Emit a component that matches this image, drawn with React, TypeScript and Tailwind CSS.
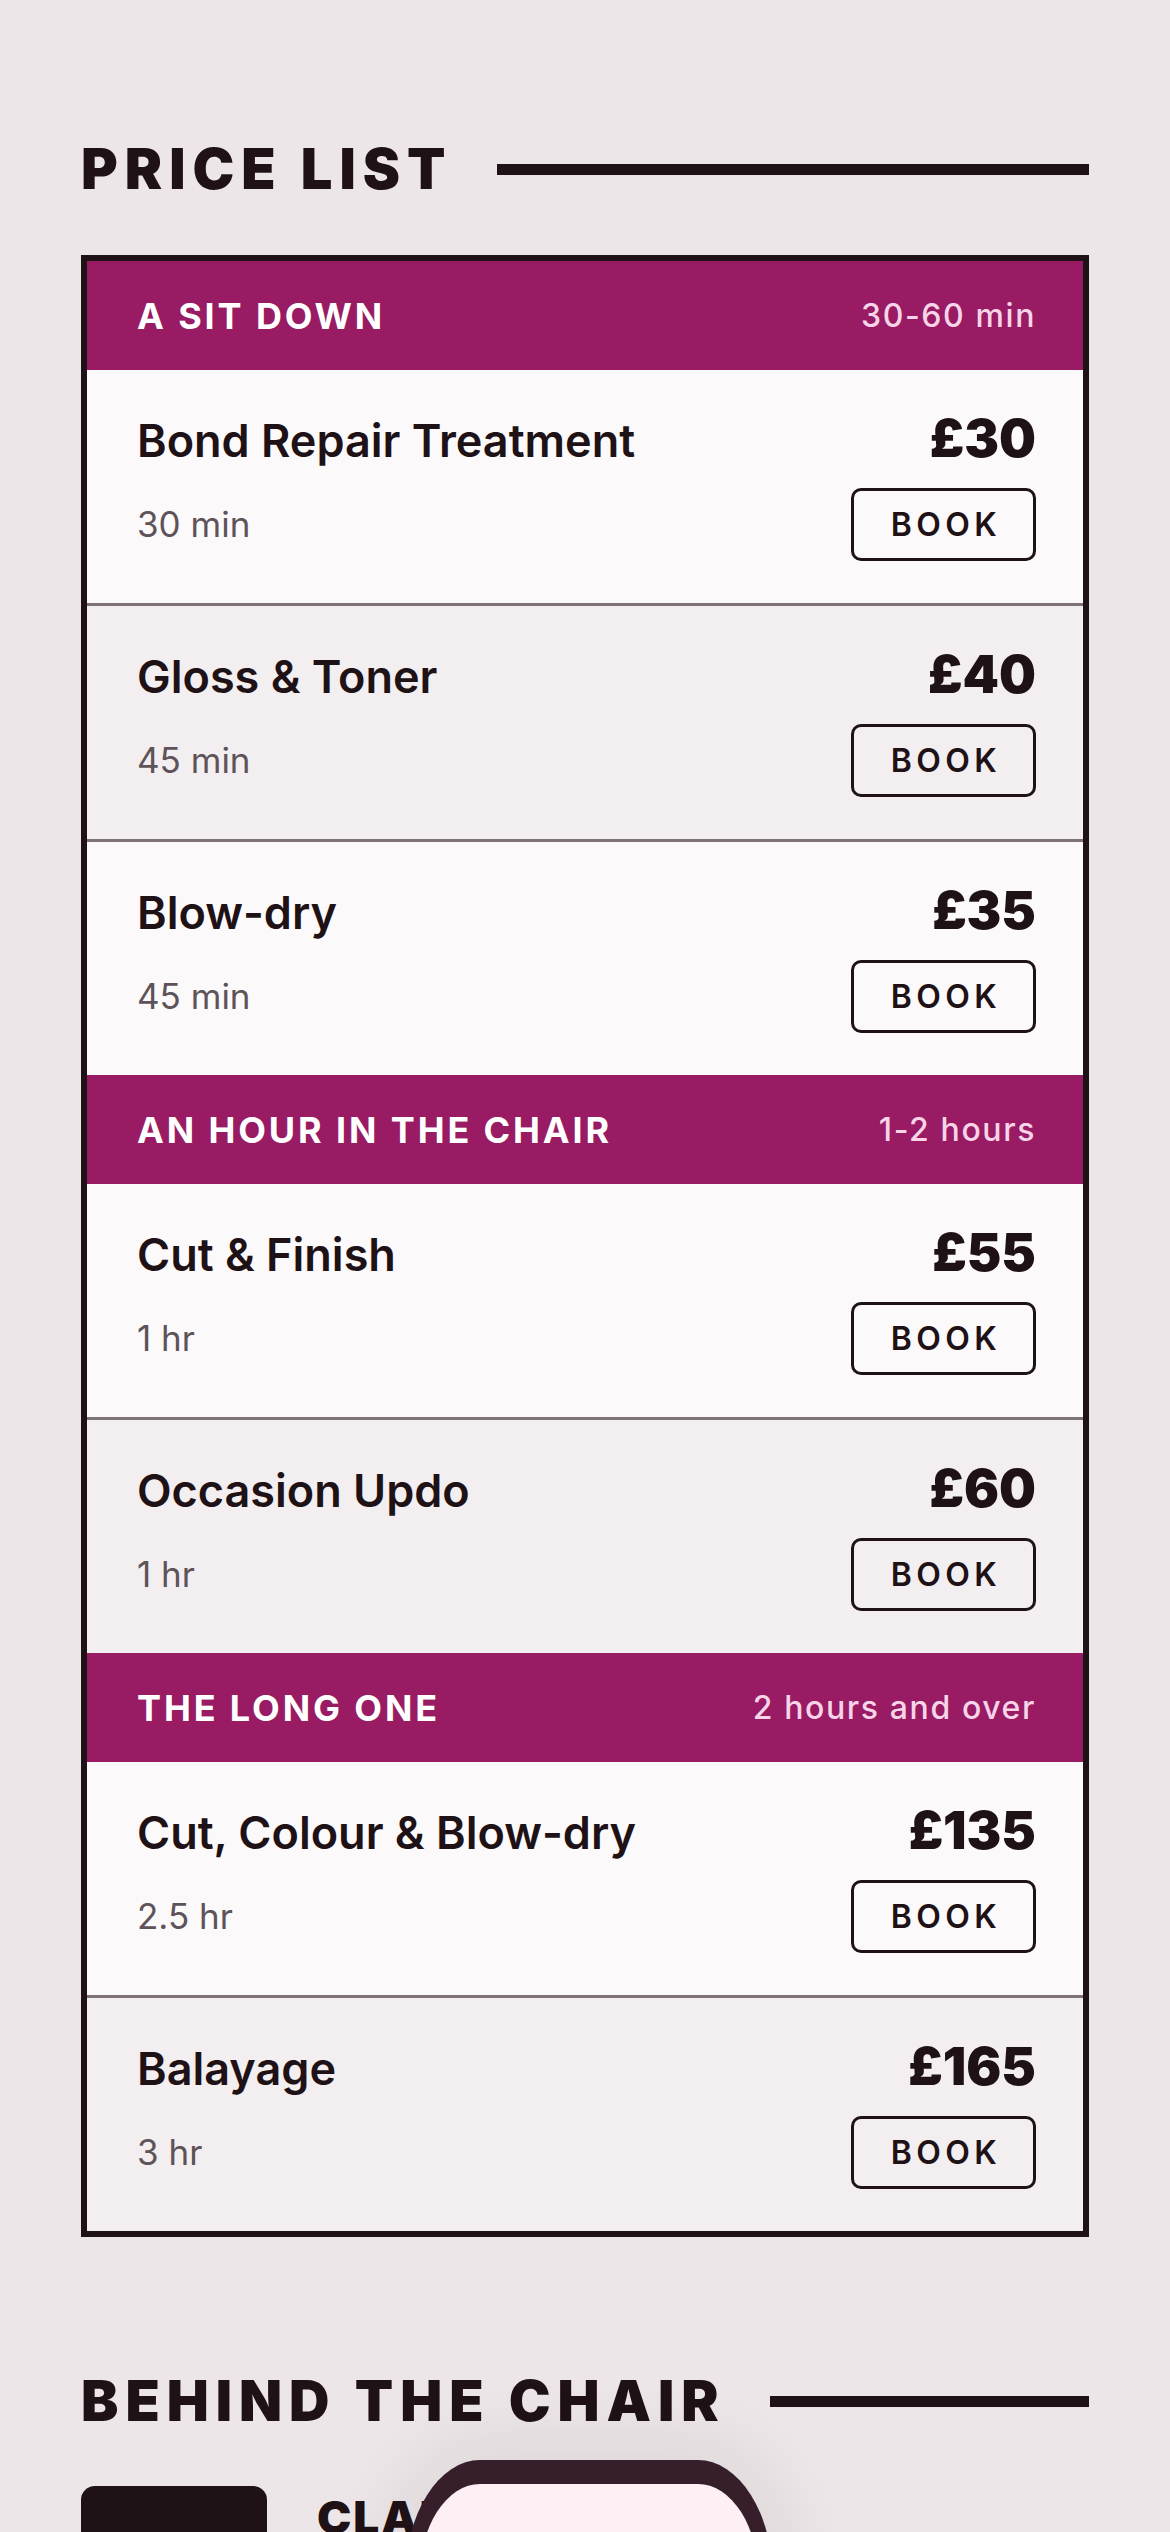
const groups = [
  {
    title: 'A SIT DOWN',
    range: '30-60 min',
    items: [
      { name: 'Bond Repair Treatment', time: '30 min', price: '£30' },
      { name: 'Gloss & Toner', time: '45 min', price: '£40' },
      { name: 'Blow-dry', time: '45 min', price: '£35' },
    ],
  },
  {
    title: 'AN HOUR IN THE CHAIR',
    range: '1-2 hours',
    items: [
      { name: 'Cut & Finish', time: '1 hr', price: '£55' },
      { name: 'Occasion Updo', time: '1 hr', price: '£60' },
    ],
  },
  {
    title: 'THE LONG ONE',
    range: '2 hours and over',
    items: [
      { name: 'Cut, Colour & Blow-dry', time: '2.5 hr', price: '£135' },
      { name: 'Balayage', time: '3 hr', price: '£165' },
    ],
  },
];

const display = { fontFamily: 'Inter, "Liberation Sans", sans-serif' };

function SectionTitle({ children }: { children: string }) {
  return (
    <div className="flex items-center gap-[44px]">
      <h2 className="text-[56px] leading-none font-black tracking-[0.125em] text-[#1e1216] whitespace-nowrap" style={display}>
        {children}
      </h2>
      <div className="h-[11px] flex-1 bg-[#1e1216]" />
    </div>
  );
}

export default function App() {
  return (
    <div className="relative min-h-[2532px] overflow-hidden bg-[#ece6e8] text-[#1e1216]" style={{ fontFamily: 'Inter, "Liberation Sans", sans-serif' }}>
      <div className="px-[81px] pt-[141px]">
        <SectionTitle>PRICE LIST</SectionTitle>

        {/* Price list card */}
        <div className="mt-[58px] border-[6px] border-[#1e1216]">
          {groups.map((group) => (
            <div key={group.title}>
              <div className="flex h-[109px] items-center justify-between bg-[#981b63] pl-[50px] pr-[47px]">
                <span className="text-[36px] font-bold tracking-[0.08em] text-white">{group.title}</span>
                <span className="text-[32px] font-medium tracking-[0.05em] text-[#f7d4e7]">{group.range}</span>
              </div>
              {group.items.map((item, idx) => (
                <div
                  key={item.name}
                  className={
                    (idx % 2 === 0 ? 'bg-[#fbf9fa] ' : 'bg-[#f3eff0] ') +
                    (idx > 0 ? 'border-t-[3px] border-[#807378] ' : '') +
                    'pl-[50px] pr-[47px] pt-[43px] pb-[42px]'
                  }
                >
                  <div className="flex items-baseline justify-between">
                    <span className="text-[45px] leading-none font-semibold">{item.name}</span>
                    <span className="text-[52px] leading-none font-black" style={display}>{item.price}</span>
                  </div>
                  <div className="mt-[23px] flex items-center justify-between">
                    <span className="text-[35px] text-[#5d5358]">{item.time}</span>
                    <button className="flex h-[73px] w-[185px] items-center justify-center rounded-[10px] border-[3px] border-[#1e1216] pl-[5px] text-[32px] font-semibold tracking-[0.14em] text-[#1e1216]">
                      BOOK
                    </button>
                  </div>
                </div>
              ))}
            </div>
          ))}
        </div>

        <div className="mt-[136px]">
          <SectionTitle>BEHIND THE CHAIR</SectionTitle>
        </div>

        <div className="mt-[57px] flex gap-[50px]">
          <div className="h-[240px] w-[186px] shrink-0 rounded-[14px] bg-[#1e1216]" />
          <div className="pt-[8px]">
            <h3 className="text-[46px] leading-none font-black tracking-[0.04em]" style={display}>CLARA</h3>
          </div>
        </div>
      </div>

      {/* Floating bottom sheet */}
      <div className="absolute top-[2460px] left-[405px] h-[200px] w-[368px] rounded-t-[75px_120px] border-x-[14px] border-t-[24px] border-[#361e2b] bg-[#fdeff4] shadow-[0_0_70px_20px_rgba(60,30,45,0.07)]" />
    </div>
  );
}
